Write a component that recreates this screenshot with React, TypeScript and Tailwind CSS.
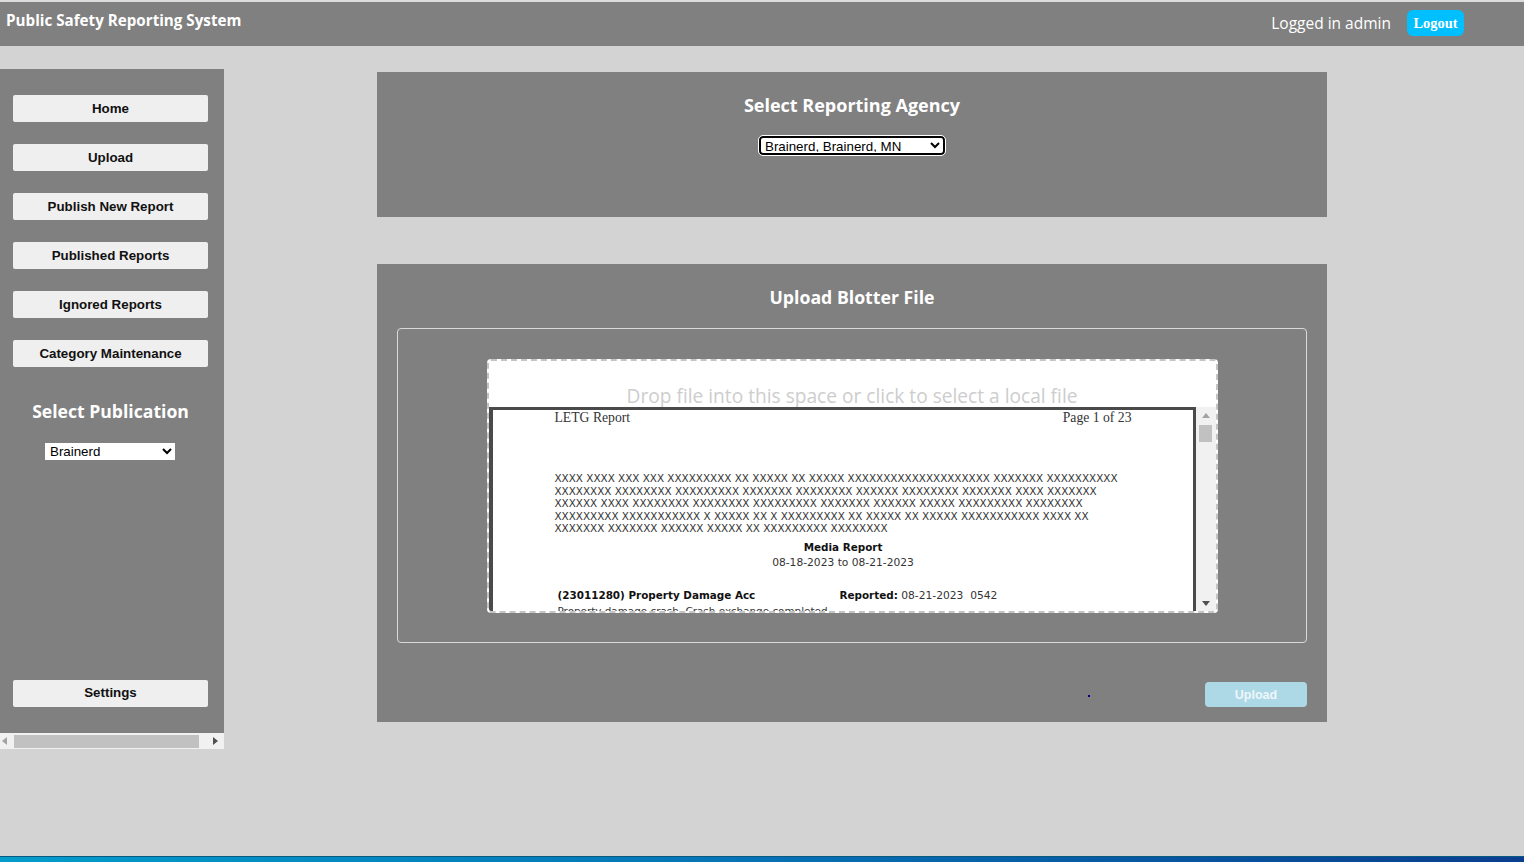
import React from 'react';

const uiFont = "font-['Open_Sans','Noto_Sans',sans-serif]";
const navItems = ['Home', 'Upload', 'Publish New Report', 'Published Reports', 'Ignored Reports', 'Category Maintenance'];

const blotterLines = [
  'XXXX XXXX XXX XXX XXXXXXXXX XX XXXXX XX XXXXX XXXXXXXXXXXXXXXXXXXX XXXXXXX XXXXXXXXXX',
  'XXXXXXXX XXXXXXXX XXXXXXXXX XXXXXXX XXXXXXXX XXXXXX XXXXXXXX XXXXXXX XXXX XXXXXXX',
  'XXXXXX XXXX XXXXXXXX XXXXXXXX XXXXXXXXX XXXXXXX XXXXXX XXXXX XXXXXXXXX XXXXXXXX',
  'XXXXXXXXX XXXXXXXXXXX X XXXXX XX X XXXXXXXXX XX XXXXX XX XXXXX XXXXXXXXXXX XXXX XX',
  'XXXXXXX XXXXXXX XXXXXX XXXXX XX XXXXXXXXX XXXXXXXX',
];

const NavButton = ({ label }: { label: string }) => (
  <button className="w-[195px] h-[27px] bg-[#efefef] rounded-[2px] text-[13.33px] font-bold text-[#111] font-['Liberation_Sans',sans-serif]">
    {label}
  </button>
);

const Arrow = ({ dir, className }: { dir: 'up' | 'down' | 'left' | 'right'; className: string }) => {
  const points = { up: '4,1 8,6 0,6', down: '0,2 8,2 4,7', left: '6,0 6,8 1,4', right: '2,0 2,8 7,4' }[dir];
  return (
    <svg viewBox="0 0 8 8" className={className} fill="currentColor">
      <polygon points={points} />
    </svg>
  );
};

const Sidebar = () => (
  <aside className="w-[224px] shrink-0 mt-[23px] h-[680px] flex flex-col">
    <div className="h-[664px] bg-[#808080] flex flex-col items-center pt-[26px] pr-[3px]">
      <div className="flex flex-col gap-[22px]">
        {navItems.map((item) => (
          <NavButton key={item} label={item} />
        ))}
      </div>
      <h2 className={`mt-[31px] text-[17.6px] leading-[27px] font-bold text-white ${uiFont}`}>Select Publication</h2>
      <select
        defaultValue="Brainerd"
        className="mt-[18px] mr-[1px] w-[130px] h-[17px] bg-white text-[13.33px] leading-[15px] text-black pl-[1px] font-['Liberation_Sans',sans-serif]"
      >
        <option>Brainerd</option>
      </select>
      <div className="mt-[219px]">
        <NavButton label="Settings" />
      </div>
    </div>
    <div className="h-[16px] bg-[#f1f1f1] flex items-center">
      <div className="w-[14px] flex pl-[1px] text-[#a3a3a3]">
        <Arrow dir="left" className="w-[8px] h-[8px]" />
      </div>
      <div className="w-[185px] h-[13px] bg-[#c1c1c1]" />
      <div className="flex-1 flex justify-end pr-[5px] text-[#505050]">
        <Arrow dir="right" className="w-[8px] h-[8px]" />
      </div>
    </div>
  </aside>
);

const PreviewPage = () => (
  <div className="flex-1 min-w-0 bg-white border-l-[4px] border-r-[3px] border-t-[3px] border-[#4a4a4a] border-b-0 overflow-hidden pl-[62px] pr-[20px]">
    <div className="flex justify-between pr-[41px] text-[13.7px] leading-[16px] font-['Liberation_Serif',serif] text-[#333]">
      <span>LETG Report</span>
      <span>Page 1 of 23</span>
    </div>
    <div className="mt-[46px] font-['DejaVu_Sans',sans-serif] text-[10.4px] leading-[12.5px] whitespace-nowrap text-[#333]">
      {blotterLines.map((line) => (
        <div key={line}>{line}</div>
      ))}
    </div>
    <div className="mt-[4px] w-[577px] text-center font-['DejaVu_Sans',sans-serif] text-[10.4px] leading-[16px] whitespace-nowrap">
      <div className="font-bold text-[#111]">Media Report</div>
      <div className="text-[10.7px] text-[#333]">08-18-2023 to 08-21-2023</div>
    </div>
    <div className="mt-[16px] pl-[3px] flex font-['DejaVu_Sans',sans-serif] text-[10.4px] leading-[16px] whitespace-nowrap">
      <span className="w-[282px] font-bold text-[#111]">(23011280) Property Damage Acc</span>
      <span className="text-[10.7px] text-[#333]">
        <b className="text-[10.4px] text-[#111]">Reported:</b> 08-21-2023 &nbsp;0542
      </span>
    </div>
    <div className="mt-[-1px] font-['DejaVu_Sans',sans-serif] text-[10.4px] leading-[16px] whitespace-nowrap pl-[3px] text-[#333]">
      Property damage crash. Crash exchange completed.
    </div>
  </div>
);

const Dropzone = () => (
  <div className="w-[731px] h-[254px] bg-white rounded-[4px] border-2 border-dashed border-[#c4c4c4] flex flex-col overflow-hidden">
    <div className={`h-[46px] shrink-0 flex items-end justify-center text-[19.15px] leading-[22px] text-[#cdcdcd] ${uiFont}`}>
      Drop file into this space or click to select a local file
    </div>
    <div className="flex-1 min-h-0 flex">
      <PreviewPage />
      <div className="w-[20px] shrink-0 bg-[#f1f1f1] flex flex-col items-center">
        <Arrow dir="up" className="w-[8px] h-[8px] mt-[5px] text-[#a3a3a3]" />
        <div className="w-[13px] h-[17px] mt-[5px] bg-[#c1c1c1]" />
        <Arrow dir="down" className="w-[8px] h-[8px] mt-auto mb-[4px] text-[#505050]" />
      </div>
    </div>
  </div>
);

export default function App() {
  return (
    <div className="w-[1524px] h-[862px] overflow-hidden bg-[#d3d3d3] flex flex-col border-t-2 border-[#dcdcdc]">
      <header className={`h-[44px] shrink-0 bg-[#808080] flex text-white ${uiFont}`}>
        <div className="pl-[6px] pt-[6px] text-[15.2px] leading-[24px] font-bold">Public Safety Reporting System</div>
        <div className="ml-auto mr-[60px] flex items-center gap-[16px] pb-[2px]">
          <span className="text-[15.5px] leading-[24px]">Logged in admin</span>
          <button className="w-[57px] h-[26px] pt-[1px] bg-[#00bfff] rounded-[6px] text-[14.4px] font-bold font-['Liberation_Serif',serif] text-white">
            Logout
          </button>
        </div>
      </header>

      <div className="flex-1 min-h-0 flex">
        <Sidebar />
        <main className="ml-[153px] mt-[26px] w-[950px] flex flex-col gap-[47px]">
          <section className="h-[145px] bg-[#808080] flex flex-col items-center pt-[19px]">
            <h1 className={`text-[18px] leading-[29px] font-bold text-white ${uiFont}`}>Select Reporting Agency</h1>
            <select
              defaultValue="Brainerd, Brainerd, MN"
              className="mt-[16px] w-[186px] h-[19px] pb-[1px] bg-white border-2 border-black rounded-[4px] outline outline-1 outline-white text-[13.33px] leading-[15px] text-black font-['Liberation_Sans',sans-serif]"
            >
              <option>Brainerd, Brainerd, MN</option>
            </select>
          </section>

          <section className="h-[458px] bg-[#808080] flex flex-col items-center pt-[19px] px-[20px]">
            <h1 className={`text-[17.7px] leading-[29px] font-bold text-white ${uiFont}`}>Upload Blotter File</h1>
            <div className="mt-[16px] w-[910px] h-[315px] border border-[#d9d9d9] rounded-[4px] flex justify-center pt-[30px]">
              <Dropzone />
            </div>
            <div className="mt-[39px] w-full flex items-center justify-end">
              <span className="w-[2px] h-[2px] mr-[115px] mt-[3px] bg-[#00008b]" />
              <button className="w-[102px] h-[25px] pt-[1px] bg-[#add8e6] rounded-[4px] text-[12.5px] font-bold text-[#eef7fa] font-['Liberation_Sans',sans-serif]">
                Upload
              </button>
            </div>
          </section>
        </main>
      </div>

      <footer className="h-[6px] shrink-0 border-t border-[#0a5a80] bg-gradient-to-r from-[#049ccb] via-[#0672b5] to-[#0a3d8f]" />
    </div>
  );
}
